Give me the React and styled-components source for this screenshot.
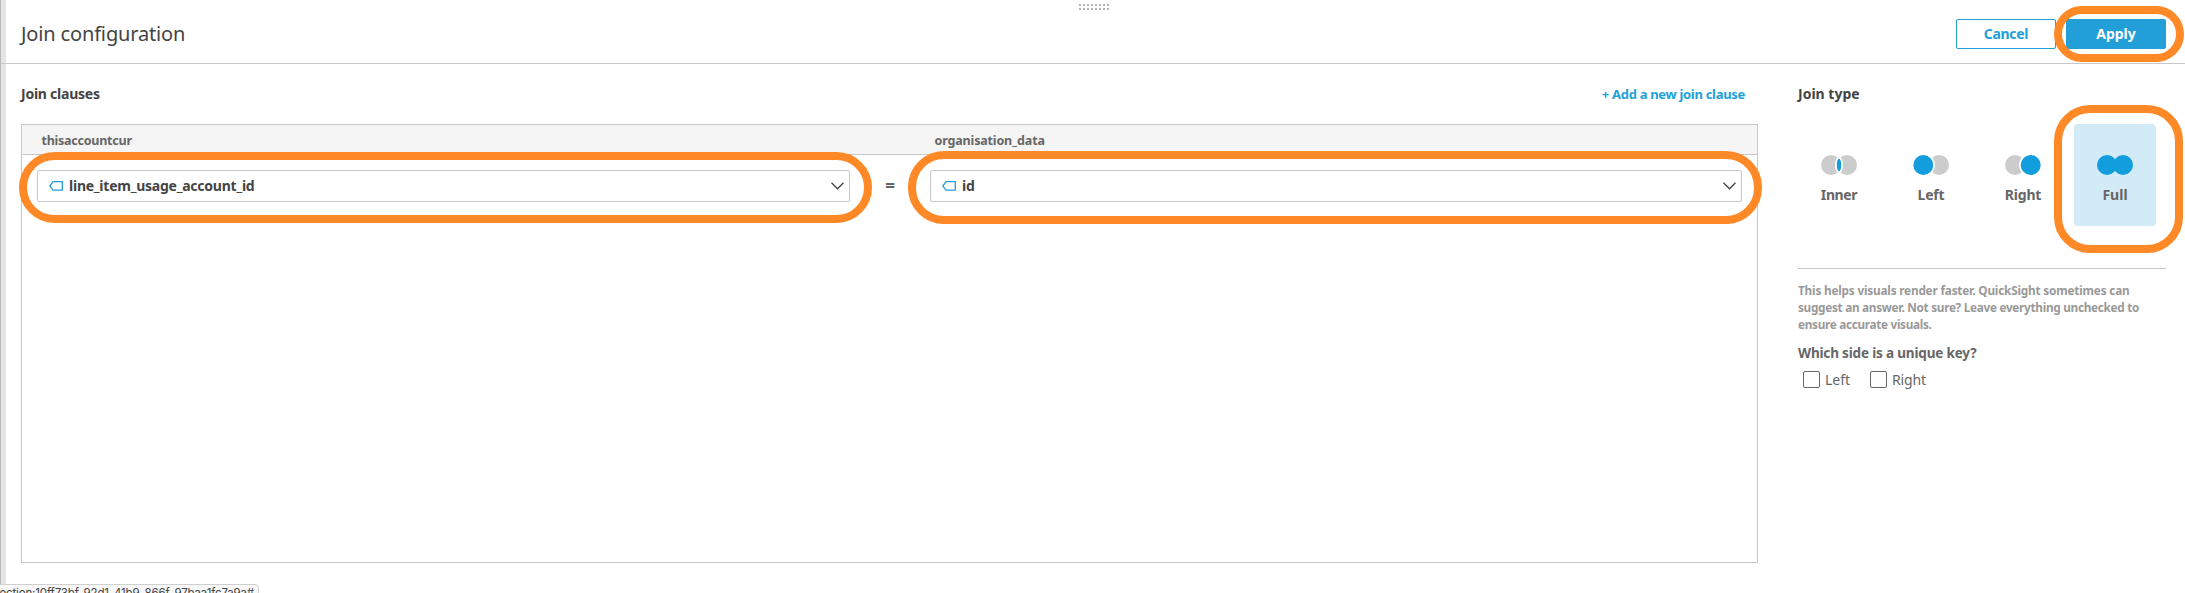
import React from 'react';
import styled, { createGlobalStyle, css } from 'styled-components';

const GlobalStyle = createGlobalStyle`
  * { box-sizing: border-box; }
  body {
    margin: 0;
    background: #fff;
    color: #444;
    font-family: "Noto Sans", "Open Sans", sans-serif;
  }
`;

const tracked = css`
  letter-spacing: ${p => p.$tracking || 0}px;
  white-space: nowrap;
`;

const Window = styled.div`
  position: relative;
  width: 2185px;
  height: 593px;
  display: flex;
  overflow: hidden;
`;

const Gutter = styled.div`
  flex: none;
  width: 6px;
  background: #e5e5e5;
  border-left: 1px solid #b8b8b8;
`;

const Pane = styled.div`
  flex: 1;
  display: flex;
  flex-direction: column;
`;

const Header = styled.header`
  position: relative;
  height: 64px;
  margin-left: -5px;
  padding: 4px 19px 0 20px;
  display: flex;
  align-items: center;
  border-bottom: 1px solid #c8c8c8;
`;

const Title = styled.h1`
  ${tracked}
  flex: 1;
  margin: 0;
  font-size: 20px;
  line-height: 28px;
  font-weight: 400;
`;

const DragHandle = styled.div`
  position: absolute;
  top: 4px;
  left: 1078px;
  display: grid;
  grid-template-columns: repeat(8, 2px);
  gap: 2px;
`;

const Dot = styled.i`
  width: 2px;
  height: 2px;
  background: #b3b3b3;
`;

const Actions = styled.div`
  display: flex;
  gap: 10px;
`;

const Anchor = styled.div`
  position: relative;
`;

const Highlight = styled.span`
  position: absolute;
  inset: ${p => p.$inset};
  border: 8px solid #ff8827;
  border-radius: ${p => p.$radius}px;
  pointer-events: none;
  z-index: 2;
`;

const Button = styled.button`
  ${tracked}
  display: block;
  width: 100px;
  height: 30px;
  padding: 0;
  border: 1px solid #229fd9;
  border-radius: 2px;
  background: ${p => (p.$primary ? '#229fd9' : '#fff')};
  color: ${p => (p.$primary ? '#fff' : '#229fd9')};
  font-family: inherit;
  font-size: 14px;
  line-height: 28px;
  font-weight: 700;
`;

const Body = styled.main`
  display: flex;
  gap: 40px;
  padding-left: 15px;
`;

const Clauses = styled.section`
  width: 1737px;
`;

const SectionHead = styled.div`
  height: 60px;
  padding-right: 13px;
  display: flex;
  align-items: center;
  justify-content: space-between;
`;

const SectionTitle = styled.h2`
  ${tracked}
  margin: 0;
  font-size: 14px;
  line-height: 20px;
  font-weight: 700;
`;

const AddLink = styled.a`
  ${tracked}
  color: #229fd9;
  font-size: 13px;
  line-height: 20px;
  font-weight: 700;
`;

const Table = styled.div`
  height: 439px;
  border: 1px solid #c8c8c8;
`;

const columns = css`
  display: grid;
  grid-template-columns: 813px 80px 812px;
  padding-left: 15px;
`;

const TableHead = styled.div`
  ${columns}
  height: 30px;
  align-items: center;
  background: #f5f5f5;
  border-bottom: 1px solid #c8c8c8;
`;

const TableName = styled.div`
  ${tracked}
  padding: 2px 0 0 4.5px;
  color: #666;
  font-size: 12.5px;
  line-height: 18px;
  font-weight: 700;

  &:nth-child(2) { grid-column: 3; }
`;

const ClauseRow = styled.div`
  ${columns}
  padding-top: 15px;
  align-items: center;
`;

const Select = styled.div`
  height: 32px;
  padding: 0 5px 0 11px;
  display: flex;
  align-items: center;
  border: 1px solid #c8c8c8;
  border-radius: 2px;
`;

const SelectValue = styled.span`
  ${tracked}
  flex: 1;
  margin-left: 6px;
  font-size: 14px;
  line-height: 20px;
  font-weight: 700;
`;

const Equals = styled.div`
  color: #666;
  font-size: 17px;
  line-height: 20px;
  font-weight: 700;
  text-align: center;
`;

const Sidebar = styled.aside`
  width: 368px;
`;

const JoinTypes = styled.div`
  display: flex;
  gap: 10px;
  padding-bottom: 42px;
  border-bottom: 1px solid #c8c8c8;
`;

const JoinTile = styled.div`
  width: 82px;
  height: 102px;
  padding-top: 31px;
  display: flex;
  flex-direction: column;
  align-items: center;
  gap: 10px;
  border-radius: 4px;
  background: ${p => (p.$selected ? '#d3ebf7' : 'transparent')};
`;

const JoinLabel = styled.span`
  ${tracked}
  color: #666;
  font-size: 14px;
  line-height: 20px;
  font-weight: 700;
`;

const Hint = styled.p`
  margin: 12.5px 0 10px;
  color: #999;
  font-size: 11.75px;
  line-height: 17px;
  font-weight: 700;
`;

const HintLine = styled.span`
  ${tracked}
  display: block;
`;

const Question = styled.div`
  ${tracked}
  color: #666;
  font-size: 13.5px;
  line-height: 20px;
  font-weight: 700;
`;

const Options = styled.div`
  display: flex;
  gap: 20px;
  padding: 8px 0 0 5px;
`;

const Option = styled.label`
  ${tracked}
  display: flex;
  align-items: center;
  gap: 5px;
  height: 17px;
  color: #666;
  font-size: 14px;
  line-height: 17px;
`;

const Box = styled.span`
  width: 17px;
  height: 17px;
  border: 1px solid #666;
  border-radius: 2px;
`;

const StatusBar = styled.div`
  position: absolute;
  left: -2px;
  top: 584px;
  width: 261px;
  height: 24px;
  padding-right: 4px;
  overflow: hidden;
  background: #f8f8f8;
  border: 1px solid #d0d0d0;
  border-radius: 0 4px 0 0;
  color: #444;
  font-family: Inter, sans-serif;
  font-size: 11.5px;
  letter-spacing: -0.15px;
  line-height: 17px;
  white-space: nowrap;
  display: flex;
  justify-content: flex-end;
`;

const TagIcon = () => (
  <svg width="14" height="10" viewBox="0 0 14 10" fill="none" stroke="#229fd9" strokeWidth="1.3">
    <path d="M4 .7H13.3V9.2H4L.8 5z" />
  </svg>
);

const Chevron = () => (
  <svg width="13" height="8" viewBox="0 0 13 8" fill="none" stroke="#444" strokeWidth="1.3">
    <path d="M.5 .8L6.5 6.8L12.5 .8" />
  </svg>
);

const GREY = '#ccc';
const BLUE = '#129ddc';

function VennIcon({ kind }) {
  return (
    <svg width="36" height="20" viewBox="0 0 36 20">
      {kind === 'inner' && (
        <>
          <circle cx="10" cy="10" r="10" fill={GREY} />
          <circle cx="26" cy="10" r="10" fill={GREY} />
          <ellipse cx="18" cy="10" rx="4" ry="8.4" fill="#fff" />
          <ellipse cx="18" cy="10" rx="2.2" ry="6.2" fill={BLUE} />
        </>
      )}
      {kind === 'left' && (
        <>
          <circle cx="26" cy="10" r="10" fill={GREY} />
          <circle cx="10.3" cy="10" r="11.6" fill="#fff" />
          <circle cx="10.3" cy="10" r="10" fill={BLUE} />
        </>
      )}
      {kind === 'right' && (
        <>
          <circle cx="10" cy="10" r="10" fill={GREY} />
          <circle cx="25.7" cy="10" r="11.6" fill="#fff" />
          <circle cx="25.7" cy="10" r="10" fill={BLUE} />
        </>
      )}
      {kind === 'full' && (
        <>
          <circle cx="10" cy="10" r="10" fill={BLUE} />
          <circle cx="26" cy="10" r="10" fill={BLUE} />
        </>
      )}
    </svg>
  );
}

const joinTypes = [
  { kind: 'inner', label: 'Inner', tracking: -0.4 },
  { kind: 'left', label: 'Left', tracking: -0.2 },
  { kind: 'right', label: 'Right', tracking: -0.2 },
  { kind: 'full', label: 'Full', tracking: 0, selected: true },
];

const ColumnSelect = ({ value, inset }) => (
  <Anchor>
    <Select>
      <TagIcon />
      <SelectValue $tracking={-0.24}>{value}</SelectValue>
      <Chevron />
    </Select>
    <Highlight $inset={inset} $radius={36} />
  </Anchor>
);

export default function App() {
  return (
    <Window>
      <GlobalStyle />
      <Gutter />
      <Pane>
        <Header>
          <DragHandle>{Array.from({ length: 16 }, (_, i) => <Dot key={i} />)}</DragHandle>
          <Title $tracking={-0.15}>Join configuration</Title>
          <Actions>
            <Button $tracking={-0.3}>Cancel</Button>
            <Anchor>
              <Button $primary>Apply</Button>
              <Highlight $inset="-13px -18px -13px -12px" $radius={28} />
            </Anchor>
          </Actions>
        </Header>
        <Body>
          <Clauses>
            <SectionHead>
              <SectionTitle $tracking={-0.24}>Join clauses</SectionTitle>
              <AddLink $tracking={-0.3}>+ Add a new join clause</AddLink>
            </SectionHead>
            <Table>
              <TableHead>
                <TableName $tracking={-0.24}>thisaccountcur</TableName>
                <TableName $tracking={-0.15}>organisation_data</TableName>
              </TableHead>
              <ClauseRow>
                <ColumnSelect value="line_item_usage_account_id" inset="-18px -22px -21px -18px" />
                <Equals>=</Equals>
                <ColumnSelect value="id" inset="-19px -20px -22px -22px" />
              </ClauseRow>
            </Table>
          </Clauses>
          <Sidebar>
            <SectionHead>
              <SectionTitle>Join type</SectionTitle>
            </SectionHead>
            <JoinTypes>
              {joinTypes.map(t => (
                <Anchor key={t.kind}>
                  <JoinTile $selected={t.selected}>
                    <VennIcon kind={t.kind} />
                    <JoinLabel $tracking={t.tracking}>{t.label}</JoinLabel>
                  </JoinTile>
                  {t.selected && <Highlight $inset="-19px -27px -27px -20px" $radius={36} />}
                </Anchor>
              ))}
            </JoinTypes>
            <Hint>
              <HintLine $tracking={-0.18}>This helps visuals render faster. QuickSight sometimes can</HintLine>
              <HintLine $tracking={-0.28}>suggest an answer. Not sure? Leave everything unchecked to</HintLine>
              <HintLine $tracking={-0.3}>ensure accurate visuals.</HintLine>
            </Hint>
            <Question $tracking={-0.17}>Which side is a unique key?</Question>
            <Options>
              <Option><Box />Left</Option>
              <Option $tracking={-0.2}><Box />Right</Option>
            </Options>
          </Sidebar>
        </Body>
      </Pane>
      <StatusBar>ection:10ff73bf-92d1-41b9-866f-97baa1fc7a9a#</StatusBar>
    </Window>
  );
}
